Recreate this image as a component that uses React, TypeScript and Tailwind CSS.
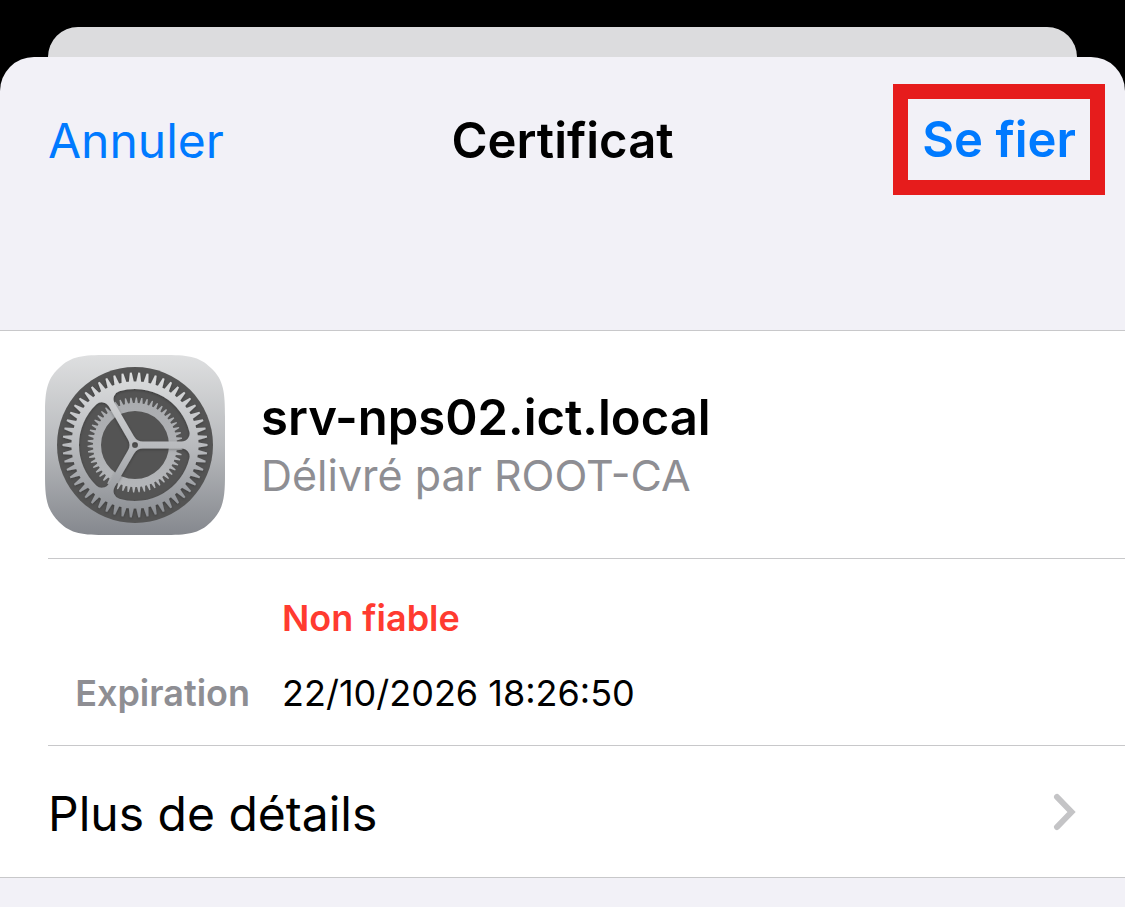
const TEETH = 54;

function toothedRing(tip: number, root: number, phase: number): string {
  const step = (2 * Math.PI) / TEETH;
  const at = (r: number, a: number) =>
    `${(90 + r * Math.cos(a)).toFixed(2)} ${(90 + r * Math.sin(a)).toFixed(2)}`;
  const points: string[] = [];
  for (let i = 0; i < TEETH; i++) {
    const a = (i + phase) * step;
    points.push(
      at(root, a - step * 0.33),
      at(tip, a - step * 0.11),
      at(tip, a + step * 0.11),
      at(root, a + step * 0.33),
    );
  }
  return `M${points.join("L")}Z`;
}

function circle(r: number): string {
  return `M${90 - r} 90a${r} ${r} 0 1 0 ${2 * r} 0a${r} ${r} 0 1 0 ${-2 * r} 0Z`;
}

function opening(turn: number): string {
  const half = 3.4;
  const outer = 56;
  const fillet = 8;
  const cx = Math.sqrt((outer - fillet) ** 2 - (half + fillet) ** 2);
  const k = outer / (outer - fillet);
  const place = (x: number, y: number, mirrored: boolean) => {
    const angle = Math.atan2(y, x);
    const r = Math.hypot(x, y);
    const a = (mirrored ? (2 * Math.PI) / 3 - angle : angle) + turn;
    return `${(90 + r * Math.cos(a)).toFixed(2)} ${(90 + r * Math.sin(a)).toFixed(2)}`;
  };
  const vertex = half / Math.tan(Math.PI / 3);
  return [
    `M${place(8, half, false)}`,
    `L${place(cx, half, false)}`,
    `A${fillet} ${fillet} 0 0 1 ${place(cx * k, (half + fillet) * k, false)}`,
    `A${outer} ${outer} 0 0 1 ${place(cx * k, (half + fillet) * k, true)}`,
    `A${fillet} ${fillet} 0 0 1 ${place(cx, half, true)}`,
    `L${place(8, half, true)}`,
    `Q${place(vertex, half, false)} ${place(8, half, false)}Z`,
  ].join("");
}

const third = (2 * Math.PI) / 3;
const innerGear = toothedRing(47.5, 42, -0.25) + circle(34);
const outerGear =
  toothedRing(72.5, 63.5, 0) + opening(0) + opening(third) + opening(2 * third) + circle(3);

function SettingsIcon() {
  return (
    <svg viewBox="0 0 180 180" className="size-45 shrink-0" aria-hidden="true">
      <defs>
        <linearGradient id="tile" x1="0" y1="0" x2="0" y2="1">
          <stop offset="0" stopColor="#dedfe0" />
          <stop offset="0.5" stopColor="#b8babd" />
          <stop offset="1" stopColor="#85888e" />
        </linearGradient>
        <linearGradient id="face" gradientUnits="userSpaceOnUse" x1="0" y1="18" x2="0" y2="162">
          <stop offset="0" stopColor="#dcddde" />
          <stop offset="0.5" stopColor="#b9bbbe" />
          <stop offset="1" stopColor="#8b8e93" />
        </linearGradient>
        <linearGradient id="inner" gradientUnits="userSpaceOnUse" x1="0" y1="42" x2="0" y2="138">
          <stop offset="0" stopColor="#aaacaf" />
          <stop offset="1" stopColor="#b4b6b9" />
        </linearGradient>
        <filter id="shade" x="-10%" y="-10%" width="120%" height="120%">
          <feDropShadow dx="0" dy="1" stdDeviation="1.5" floodColor="#000" floodOpacity="0.3" />
        </filter>
      </defs>
      <path
        d="M62 0H118C142 0 154 1 166 13C179 25 180 38 180 62V118C180 142 179 154 166 167C154 179 142 180 118 180H62C38 180 26 179 14 167C1 154 0 142 0 118V62C0 38 1 25 14 13C26 1 38 0 62 0Z"
        fill="url(#tile)"
      />
      <circle cx="90" cy="90" r="78" fill="#545454" />
      <path d={innerGear} fill="url(#inner)" fillRule="evenodd" />
      <path d={outerGear} fill="url(#face)" fillRule="evenodd" filter="url(#shade)" />
    </svg>
  );
}

export default function App() {
  return (
    <div className="min-h-screen bg-black pt-[27px] font-['Inter','Liberation_Sans',sans-serif] text-black">
      <div className="mx-12 h-[30px] rounded-t-[30px] bg-[#dcdcde]" />
      <main className="min-h-[850px] rounded-t-[34px] bg-[#f2f1f7]">
        <header className="grid h-[274px] grid-cols-[1fr_auto_1fr] items-start border-b border-[#c8c8ca] px-5 pt-[27px] text-[49px] leading-[60px]">
          <button
            type="button"
            className="mt-[27px] ml-7 justify-self-start text-[48px] text-[#007aff]"
          >
            Annuler
          </button>
          <h1 className="mt-[27px] font-semibold">Certificat</h1>
          <button
            type="button"
            className="flex h-[111px] items-center justify-self-end border-[15px] border-[#e61c1c] px-[14px] font-semibold text-[#007aff]"
          >
            Se fier
          </button>
        </header>
        <div className="border-b border-[#c8c8ca] bg-white">
          <section className="flex h-[227px] items-center gap-9 pl-[45px]">
            <SettingsIcon />
            <div>
              <h2 className="text-[49px] leading-[60px] font-semibold">srv-nps02.ict.local</h2>
              <p className="text-[43px] leading-[54px] text-[#8e8e93]">Délivré par ROOT-CA</p>
            </div>
          </section>
          <section className="ml-12 border-y border-[#c8c8ca] pt-[36px] pb-[29px] text-[36px] leading-[46px]">
            <p className="pl-[234px] font-semibold text-[#ff3b30]">Non fiable</p>
            <dl className="mt-[29px] grid grid-cols-[202px_1fr] gap-8">
              <dt className="text-right font-semibold text-[#8e8e93]">Expiration</dt>
              <dd>22/10/2026 18:26:50</dd>
            </dl>
          </section>
          <button
            type="button"
            className="flex h-[131px] w-full items-center justify-between px-12 text-left text-[48px] leading-[60px]"
          >
            <span className="pt-1">Plus de détails</span>
            <svg viewBox="0 0 24 40" className="h-10 w-6" fill="none" aria-hidden="true">
              <path
                d="M4 5L18.500 20L4 35"
                stroke="#c4c4c6"
                strokeWidth="6"
                strokeLinecap="round"
                strokeLinejoin="miter"
              />
            </svg>
          </button>
        </div>
      </main>
    </div>
  );
}
